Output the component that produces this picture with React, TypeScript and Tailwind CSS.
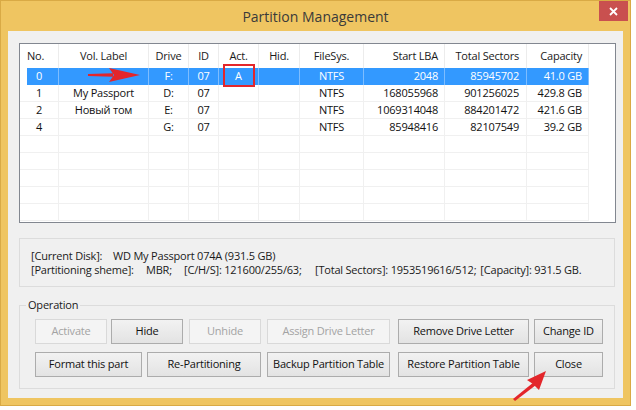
import type { ReactNode } from "react";

type Col = { label: string; w: number; head: string; cell: string };

const cols: Col[] = [
  { label: "No.", w: 39, head: "justify-start pl-[7px]", cell: "justify-center" },
  { label: "Vol. Label", w: 90, head: "justify-center", cell: "justify-center" },
  { label: "Drive", w: 40, head: "justify-center", cell: "justify-center" },
  { label: "ID", w: 30, head: "justify-center", cell: "justify-center" },
  { label: "Act.", w: 40, head: "justify-center", cell: "justify-center" },
  { label: "Hid.", w: 41, head: "justify-center", cell: "justify-center" },
  { label: "FileSys.", w: 64, head: "justify-center", cell: "justify-center" },
  { label: "Start LBA", w: 81, head: "justify-end pr-[6px]", cell: "justify-end pr-[6px]" },
  { label: "Total Sectors", w: 82, head: "justify-end pr-[7px]", cell: "justify-end pr-[7px]" },
  { label: "Capacity", w: 62, head: "justify-end pr-[6px]", cell: "justify-end pr-[6px]" },
];

const rows: string[][] = [
  ["0", "", "F:", "07", "A", "", "NTFS", "2048", "85945702", "41.0 GB"],
  ["1", "My Passport", "D:", "07", "", "", "NTFS", "168055968", "901256025", "429.8 GB"],
  ["2", "Новый том", "E:", "07", "", "", "NTFS", "1069314048", "884201472", "421.6 GB"],
  ["4", "", "G:", "07", "", "", "NTFS", "85948416", "82107549", "39.2 GB"],
  ["", "", "", "", "", "", "", "", "", ""],
  ["", "", "", "", "", "", "", "", "", ""],
  ["", "", "", "", "", "", "", "", "", ""],
  ["", "", "", "", "", "", "", "", "", ""],
  ["", "", "", "", "", "", "", "", "", ""],
];

type Btn = { label: string; w: string; ml: string; disabled?: boolean };

const buttonRows: Btn[][] = [
  [
    { label: "Activate", w: "w-[72px]", ml: "ml-0", disabled: true },
    { label: "Hide", w: "w-[72px]", ml: "ml-[4px]" },
    { label: "Unhide", w: "w-[72px]", ml: "ml-[6px]", disabled: true },
    { label: "Assign Drive Letter", w: "w-[123px]", ml: "ml-[6px]", disabled: true },
    { label: "Remove Drive Letter", w: "w-[131px]", ml: "ml-[8px]" },
    { label: "Change ID", w: "w-[69px]", ml: "ml-[5px]" },
  ],
  [
    { label: "Format this part", w: "w-[107px]", ml: "ml-0" },
    { label: "Re-Partitioning", w: "w-[114px]", ml: "ml-[5px]" },
    { label: "Backup Partition Table", w: "w-[123px]", ml: "ml-[6px]" },
    { label: "Restore Partition Table", w: "w-[131px]", ml: "ml-[8px]" },
    { label: "Close", w: "w-[69px]", ml: "ml-[5px]" },
  ],
];

function WinButton({ label, w, ml, disabled }: Btn) {
  return (
    <div
      className={
        disabled
          ? `${w} ${ml} flex h-[25px] items-center justify-center border border-[#d9d9d9] bg-[#f4f4f4] text-[#a3a3a3]`
          : `${w} ${ml} flex h-[25px] items-center justify-center border border-[#acacac] bg-gradient-to-b from-[#f2f2f2] to-[#e3e3e3] text-[#111]`
      }
    >
      {label}
    </div>
  );
}

function Cell({ w, className, children }: { w: number; className: string; children?: ReactNode }) {
  return (
    <div className={`flex shrink-0 items-center whitespace-nowrap ${className}`} style={{ width: w }}>
      {children}
    </div>
  );
}

function PartitionList() {
  return (
    <div className="relative h-[180px] w-[597px] overflow-hidden border border-[#828790] bg-white">
      <div className="flex h-[24px]">
        {cols.map((c) => (
          <Cell key={c.label} w={c.w} className={`${c.head} border-r border-[#ececec] text-[#1a1a1a]`}>
            {c.label}
          </Cell>
        ))}
      </div>
      {rows.map((r, i) => {
        const selected = i === 0;
        return (
          <div key={i} className="flex h-[17px]">
            {r.map((v, j) => (
              <Cell
                key={j}
                w={cols[j].w}
                className={
                  selected
                    ? `${cols[j].cell} ${j === 0 ? "bg-[linear-gradient(to_right,transparent_7px,#3399ff_7px)]" : "bg-[#3399ff]"} border-r border-[#7dbdff] text-white`
                    : `${cols[j].cell} border-b border-r border-[#f0f0f0] text-[#111]`
                }
              >
                {v}
              </Cell>
            ))}
          </div>
        );
      })}
      {/* annotation: red frame round the Act. cell */}
      <div className="absolute left-[203px] top-[20px] h-[23px] w-[32px] border-2 border-[#e3262b]" />
      {/* annotation: red arrow in the selected row */}
      <svg className="absolute left-[67px] top-[23px]" width="54" height="16" viewBox="0 0 54 16">
        <path d="M1 7 L26 6.2 L26 9.8 L1 9 Z" fill="#e3262b" />
        <path d="M22 1 L53 8 L22 15 L27 8 Z" fill="#e3262b" />
      </svg>
    </div>
  );
}

export default function App() {
  return (
    <div className="relative h-[410px] w-[636px] overflow-hidden bg-white font-['Open_Sans','Noto_Sans',sans-serif] text-[11px] tracking-[-0.2px]">
      <div className="flex h-[406px] w-[631px] flex-col border border-[#d9aa45] bg-[#efc561]">
        <div className="relative flex h-[30px] shrink-0 items-center justify-center">
          <span className="text-[14px] tracking-normal text-[#3a3a3a]">Partition Management</span>
          <div className="absolute right-[2px] top-0 flex h-[20px] w-[29px] items-center justify-center bg-[#c9504f]">
            <svg width="9" height="9" viewBox="0 0 9 9">
              <path d="M1 1 L8 8 M8 1 L1 8" stroke="white" strokeWidth="1.8" />
            </svg>
          </div>
        </div>

        <div className="mx-[7px] flex h-[367px] flex-col bg-[#f0f0f0] pl-[11px] pt-[12px]">
          <PartitionList />

          <div className="mt-[15px] flex h-[49px] w-[596px] flex-col justify-center border border-[#dcdcdc] pl-[11px] leading-[14px] text-[#1a1a1a]">
            <div className="flex whitespace-nowrap">
              <span className="w-[82px] shrink-0">[Current Disk]:</span>
              <span>WD My Passport 074A (931.5 GB)</span>
            </div>
            <div className="flex whitespace-nowrap">
              <span className="w-[115px] shrink-0">[Partitioning sheme]:</span>
              <span className="w-[38px] shrink-0">MBR;</span>
              <span className="w-[131px] shrink-0">[C/H/S]: 121600/255/63;</span>
              <span>[Total Sectors]: 1953519616/512;</span>
              <span className="ml-[4px]">[Capacity]: 931.5 GB.</span>
            </div>
          </div>

          <div className="relative mt-[18px] h-[84px] w-[596px] border border-[#dcdcdc] pl-[15px] pt-[13px]">
            <span className="absolute -top-[9px] left-[6px] bg-[#f0f0f0] px-[2px] leading-[16px] text-[#1a1a1a]">
              Operation
            </span>
            <div className="flex flex-col gap-[8px]">
              {buttonRows.map((row, i) => (
                <div key={i} className="flex">
                  {row.map((b) => (
                    <WinButton key={b.label} {...b} />
                  ))}
                </div>
              ))}
            </div>
          </div>
        </div>
      </div>

      {/* annotation: red arrow pointing at Close */}
      <svg className="absolute left-[510px] top-[368px]" width="40" height="34" viewBox="0 0 40 34">
        <path d="M3 31 L24 14 L26 17 L5 33 Z" fill="#e3262b" />
        <path d="M36 3 L29 22 L23 16 L17 12 Z" fill="#e3262b" />
      </svg>
    </div>
  );
}
